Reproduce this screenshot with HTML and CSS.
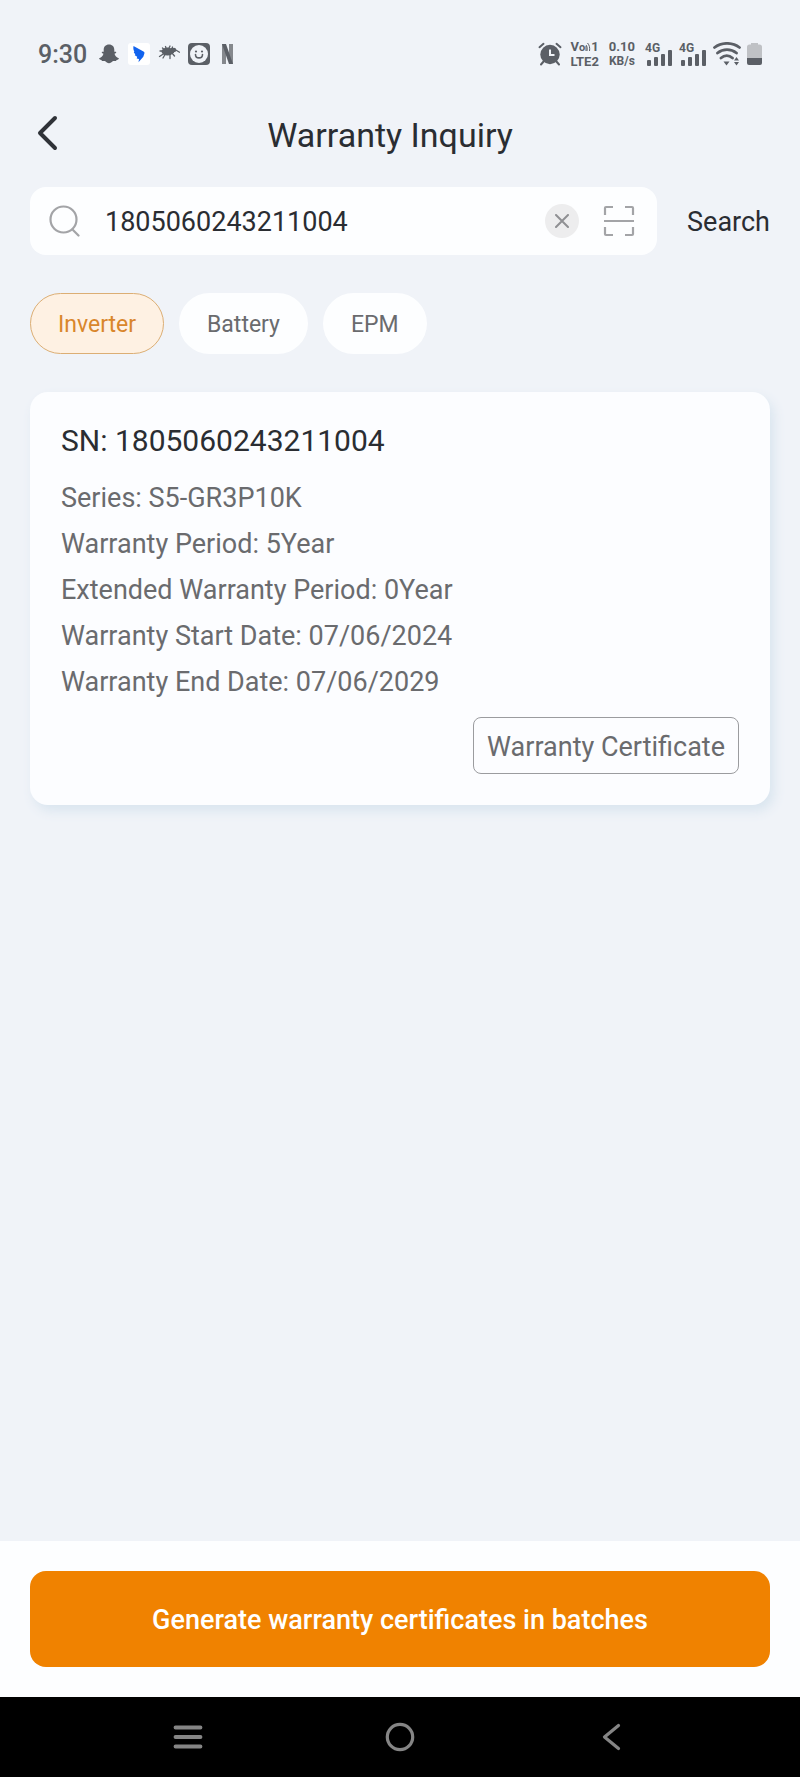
FILE: index.html
```html
<!DOCTYPE html>
<html lang="en">
<head>
    <meta charset="UTF-8">
    <meta name="viewport" content="width=device-width, initial-scale=1.0">
    <title>Warranty Inquiry</title>
    <link rel="stylesheet" href="styles.css">
</head>
<body>
    <div class="status-bar">
        <div class="status-left">
            <span class="clock">9:30</span>
            <!-- ghost -->
            <svg width="22" height="22" viewBox="0 0 22 22">
                <path fill="#5b5f66" d="M11 1.500c3.400 0 5.300 2.400 5.300 5.200v2c.7.200 1.500-.4 1.900.2.400.8-.7 1.300-1.700 1.800.6 2.300 2 3.800 4.300 4.500.4.600-.6 1.400-2.300 1.700-.3.500-.2 1.200-.8 1.200-1 0-2-.4-3 .2-1.200.8-2 1.900-3.700 1.900s-2.500-1.100-3.700-1.900c-1-.6-2-.2-3-.2-.6 0-.5-.7-.8-1.200-1.700-.3-2.700-1.100-2.300-1.700 2.300-.7 3.700-2.200 4.300-4.500-1-.5-2.100-1-1.700-1.800.4-.6 1.200 0 1.900-.2v-2c0-2.800 1.900-5.200 5.300-5.200z"/>
            </svg>
            <!-- blue bird -->
            <svg width="22" height="22" viewBox="0 0 22 22">
                <rect width="22" height="22" rx="3" fill="#fff"/>
                <path fill="#1263ee" d="M5.500 3 15.500 8.500c1 .6 1.200 1.300.8 2.300l-1 3-4.800 5.400.5-3.200-2.300-.6.5-1.600-2.400-1.500.5-1-1.500-1.800.5-1C5.600 7.500 5 5.500 5.500 3z"/>
            </svg>
            <!-- kiwi -->
            <svg width="22" height="22" viewBox="0 0 22 22">
                <g fill="#5b5f66">
                    <ellipse cx="9.500" cy="8.500" rx="6" ry="4"/>
                    <circle cx="16" cy="7" r="2.200"/>
                    <path d="M13 5h3v5h-3z"/>
                </g>
                <path d="M4 8 2 8M5.500 6 4.500 5M8 5 7.500 3.500M11 5l1-2M14 5.500l.5-1.500M17 6.500l4.500 2.700M6 10.500 1.500 13.500M7 11.500 5 15M12 11v4.500M14 10l2.500 3" fill="none" stroke="#5b5f66" stroke-width="1.300" stroke-linecap="round"/>
            </svg>
            <!-- smiley -->
            <svg width="22" height="22" viewBox="0 0 22 22">
                <rect width="22" height="22" rx="4" fill="#5b5f66"/>
                <circle cx="11" cy="11" r="9" fill="#f0f3f8"/>
                <circle cx="8" cy="8.500" r="1.100" fill="#5b5f66"/>
                <circle cx="14" cy="8.500" r="1.100" fill="#5b5f66"/>
                <path d="M7.500 11.500c0 4.500 7 4.500 7 0" fill="none" stroke="#5b5f66" stroke-width="1.600" stroke-linecap="round"/>
            </svg>
            <!-- ribbon logo -->
            <svg class="ribbon" width="13" height="22" viewBox="0 0 13 22">
                <path d="M1 1h4v20H1zM8 1h4v20H8z" fill="#85888d"/>
                <path d="M1 1h4l7 20H8z" fill="#5b5f66"/>
            </svg>
        </div>
        <div class="status-right">
            <!-- alarm clock -->
            <svg width="24" height="24" viewBox="0 0 24 24">
                <g fill="none" stroke="#5b5f66" stroke-width="2" stroke-linecap="round">
                    <path d="M1.500 5.200 5.500 1.800M18.500 1.800 22.500 5.200M6 19l-3 3.500M18 19l3 3.500"/>
                </g>
                <circle cx="12" cy="12.500" r="9.700" fill="#5b5f66"/>
                <path d="M12 7.500v5.500h4.500" fill="none" stroke="#f0f3f8" stroke-width="2"/>
            </svg>
            <div class="stack">
                <span>V<small>o</small><svg width="6" height="9" viewBox="0 0 6 9"><path d="M1 9V4M1 3c1 1 1.500 3 1 6M2.500 1c2 2 2.500 5 2 8" fill="none" stroke="#5b5f66"/></svg>1</span>
                <span>LTE2</span>
            </div>
            <div class="stack speed">
                <span>0.10</span>
                <span class="unit">KB/s</span>
            </div>
            <div class="signal">
                <span>4G</span>
                <svg width="26" height="16" viewBox="0 0 26 16" fill="#5b5f66">
                    <rect x="0" y="10" width="4" height="6" rx="1"/>
                    <rect x="7" y="7" width="4" height="9" rx="1"/>
                    <rect x="14" y="4" width="4" height="12" rx="1"/>
                    <rect x="21" y="0" width="4" height="16" rx="1"/>
                </svg>
            </div>
            <div class="signal">
                <span>4G</span>
                <svg width="26" height="16" viewBox="0 0 26 16" fill="#5b5f66">
                    <rect x="0" y="10" width="4" height="6" rx="1"/>
                    <rect x="7" y="7" width="4" height="9" rx="1"/>
                    <rect x="14" y="4" width="4" height="12" rx="1"/>
                    <rect x="21" y="0" width="4" height="16" rx="1"/>
                </svg>
            </div>
            <!-- wifi -->
            <svg class="wifi" width="28" height="24" viewBox="0 0 28 24">
                <g fill="none" stroke="#5b5f66" stroke-width="2.800" stroke-linecap="round">
                    <path d="M1.500 5.500c7-5.500 18-5.500 25 0M4.500 11c5.500-4.500 13.500-4.500 19 0M8 16c3.500-3 8-3 11.500 0"/>
                </g>
                <path d="M10.500 19.500h6l-3 4zM21 18.500l2.500-3.500 2.500 3.500zM21 20l2.500 3.500L26 20z" fill="#5b5f66"/>
            </svg>
            <!-- battery -->
            <svg width="15" height="24" viewBox="0 0 15 24">
                <path d="M4 2.500V1h7v1.500h1.500A2.500 2.500 0 0 1 15 5v11H0V5a2.500 2.500 0 0 1 2.500-2.500z" fill="#bfc1c5"/>
                <path d="M0 16h15v5a2 2 0 0 1-2 2H2a2 2 0 0 1-2-2z" fill="#5b5f66"/>
            </svg>
        </div>
    </div>

    <header class="header">
        <button class="icon-btn back" aria-label="Back">
            <svg width="22" height="36" viewBox="0 0 22 36">
                <path d="M18 3 3 18l15 15" fill="none" stroke="#2f3238" stroke-width="4" stroke-linecap="round" stroke-linejoin="round"/>
            </svg>
        </button>
        <h1>Warranty Inquiry</h1>
    </header>

    <main>
        <form class="search-row">
            <div class="search-box">
                <svg width="32" height="32" viewBox="0 0 32 32">
                    <g fill="none" stroke="#a3a4a7" stroke-width="2.200" stroke-linecap="round">
                        <circle cx="14.500" cy="14.500" r="13"/>
                        <path d="M23.500 24.500 29.500 30.500"/>
                    </g>
                </svg>
                <input type="text" value="1805060243211004" aria-label="Serial number">
                <button type="button" class="icon-btn clear" aria-label="Clear">
                    <svg width="14" height="14" viewBox="0 0 14 14">
                        <path d="M1 1l12 12M13 1 1 13" fill="none" stroke="#8f9093" stroke-width="2" stroke-linecap="round"/>
                    </svg>
                </button>
                <button type="button" class="icon-btn" aria-label="Scan">
                    <svg width="32" height="32" viewBox="0 0 32 32">
                        <path d="M2 10V3q0-1 1-1h7M22 2h7q1 0 1 1v7M30 22v7q0 1-1 1h-7M10 30H3q-1 0-1-1v-7M1 16h30" fill="none" stroke="#a3a4a7" stroke-width="2.200"/>
                    </svg>
                </button>
            </div>
            <button type="button" class="search-btn">Search</button>
        </form>

        <div class="chips">
            <button class="chip active">Inverter</button>
            <button class="chip">Battery</button>
            <button class="chip">EPM</button>
        </div>

        <section class="card">
            <h2>SN: 1805060243211004</h2>
            <p>Series: S5-GR3P10K</p>
            <p>Warranty Period: 5Year</p>
            <p>Extended Warranty Period: 0Year</p>
            <p>Warranty Start Date: 07/06/2024</p>
            <p>Warranty End Date: 07/06/2029</p>
            <button class="certificate-btn">Warranty Certificate</button>
        </section>
    </main>

    <footer class="footer">
        <button class="generate-btn">Generate warranty certificates in batches</button>
    </footer>

    <nav class="nav-bar">
        <button class="icon-btn" aria-label="Recent apps">
            <svg width="32" height="32" viewBox="0 0 32 32">
                <path d="M3.500 6.500h25M3.500 16h25M3.500 25.500h25" stroke="#858585" stroke-width="3.800" stroke-linecap="round"/>
            </svg>
        </button>
        <button class="icon-btn" aria-label="Home">
            <svg width="32" height="32" viewBox="0 0 32 32">
                <circle cx="16" cy="16" r="12.700" fill="none" stroke="#858585" stroke-width="3.200"/>
            </svg>
        </button>
        <button class="icon-btn" aria-label="Back">
            <svg width="32" height="32" viewBox="0 0 32 32">
                <path d="M22.500 4.500 8.500 16l14 11.500" fill="none" stroke="#858585" stroke-width="3.200" stroke-linecap="round" stroke-linejoin="round"/>
            </svg>
        </button>
    </nav>
</body>
</html>
```
FILE: styles.css
```css
* {
    box-sizing: border-box;
}

body {
    display: flex;
    flex-direction: column;
    min-height: 100vh;
    margin: 0;
    background: #f0f3f8;
    color: #2a2d32;
    font-family: Roboto, "Liberation Sans", sans-serif;
}

h1, h2, p {
    margin: 0;
    font-weight: 400;
}

button {
    font-family: inherit;
    border: none;
    padding: 0;
    background: none;
    color: inherit;
}

svg {
    display: block;
    flex: none;
}

.icon-btn {
    display: flex;
    align-items: center;
    justify-content: center;
}

/* status bar */
.status-bar {
    display: flex;
    justify-content: space-between;
    align-items: center;
    height: 108px;
    padding: 0 38px;
    color: #5b5f66;
}

.status-left,
.status-right {
    display: flex;
    align-items: center;
    gap: 8px;
}

.clock {
    font-size: 25px;
    font-weight: 500;
    margin-right: 3px;
}

.ribbon {
    margin-left: 3px;
}

.stack {
    display: flex;
    flex-direction: column;
    align-items: center;
    font-size: 13px;
    font-weight: 700;
    line-height: 14px;
}

.stack span {
    display: flex;
    align-items: baseline;
}

.stack small {
    font-size: 11px;
}

.stack .unit {
    font-size: 12px;
}

.speed {
    margin: 0 4px 0 2px;
}

.signal {
    position: relative;
    height: 24px;
    padding-top: 8px;
}

.signal span {
    position: absolute;
    top: 0;
    left: -2px;
    font-size: 12px;
    font-weight: 700;
    line-height: 12px;
}

.wifi {
    margin: 0 -2px 0 -2px;
}

/* header */
.header {
    display: grid;
    grid-template-columns: 48px 1fr 48px;
    align-items: start;
    padding: 0 50px 0 30px;
    margin-bottom: 25px;
}

.header h1 {
    font-size: 34px;
    line-height: 54px;
    text-align: center;
}

.back {
    width: 36px;
    height: 50px;
}

/* search */
main {
    padding: 0 30px;
}

.search-row {
    display: flex;
    align-items: center;
    gap: 30px;
}

.search-box {
    flex: 1;
    display: flex;
    align-items: center;
    gap: 24px;
    min-width: 0;
    height: 68px;
    padding: 0 22px 0 19px;
    border-radius: 16px;
    background: #fdfeff;
}

.search-box input {
    flex: 1;
    min-width: 0;
    height: 48px;
    padding: 2px 0 0;
    border: none;
    outline: none;
    background: none;
    color: inherit;
    font-family: inherit;
    font-size: 27px;
}

.clear {
    width: 34px;
    height: 34px;
    border-radius: 50%;
    background: #ededee;
}

.search-btn {
    padding-top: 2px;
    font-size: 27px;
}

/* chips */
.chips {
    display: flex;
    gap: 15px;
    margin: 38px 0;
}

.chip {
    height: 61px;
    padding: 2px 27px 0;
    border: 1px solid transparent;
    border-radius: 31px;
    background: #fdfeff;
    color: #6a6b6e;
    font-size: 23px;
}

.chip.active {
    border-color: #dcae74;
    background: #fef1e3;
    color: #d9862b;
}

/* result card */
.card {
    display: flex;
    flex-direction: column;
    padding: 31px;
    border-radius: 18px;
    background: #fcfdff;
    box-shadow: 4px 6px 12px #d9e5ef;
}

.card h2 {
    margin-bottom: 16px;
    font-size: 30px;
    line-height: 36px;
}

.card p {
    color: #6a6b6e;
    font-size: 27px;
    line-height: 46px;
}

.certificate-btn {
    align-self: flex-end;
    height: 57px;
    margin-top: 12px;
    padding: 2px 13px 0;
    border: 1px solid #9b9c9f;
    border-radius: 8px;
    color: #6a6b6e;
    font-size: 27px;
}

/* bottom action */
.footer {
    margin-top: auto;
    padding: 30px;
    background: #fdfeff;
}

.generate-btn {
    width: 100%;
    height: 96px;
    padding-top: 2px;
    border-radius: 16px;
    background: #f08200;
    color: #fff;
    font-size: 27px;
    font-weight: 500;
}

/* system navigation */
.nav-bar {
    display: flex;
    justify-content: center;
    align-items: center;
    gap: 180px;
    height: 80px;
    background: #000;
}
```
